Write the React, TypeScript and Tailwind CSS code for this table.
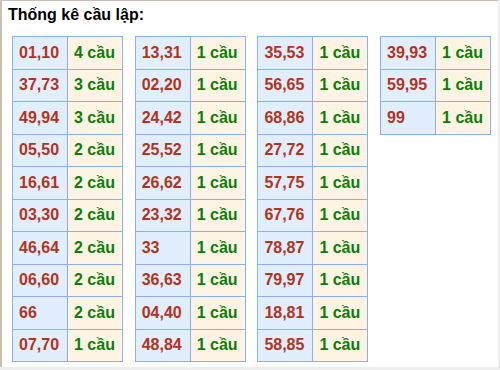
import React from "react";

const cols: [string, string][][] = [
  [
    ["01,10", "4 cầu"],
    ["37,73", "3 cầu"],
    ["49,94", "3 cầu"],
    ["05,50", "2 cầu"],
    ["16,61", "2 cầu"],
    ["03,30", "2 cầu"],
    ["46,64", "2 cầu"],
    ["06,60", "2 cầu"],
    ["66", "2 cầu"],
    ["07,70", "1 cầu"],
  ],
  [
    ["13,31", "1 cầu"],
    ["02,20", "1 cầu"],
    ["24,42", "1 cầu"],
    ["25,52", "1 cầu"],
    ["26,62", "1 cầu"],
    ["23,32", "1 cầu"],
    ["33", "1 cầu"],
    ["36,63", "1 cầu"],
    ["04,40", "1 cầu"],
    ["48,84", "1 cầu"],
  ],
  [
    ["35,53", "1 cầu"],
    ["56,65", "1 cầu"],
    ["68,86", "1 cầu"],
    ["27,72", "1 cầu"],
    ["57,75", "1 cầu"],
    ["67,76", "1 cầu"],
    ["78,87", "1 cầu"],
    ["79,97", "1 cầu"],
    ["18,81", "1 cầu"],
    ["58,85", "1 cầu"],
  ],
  [
    ["39,93", "1 cầu"],
    ["59,95", "1 cầu"],
    ["99", "1 cầu"],
  ],
];

export default function App() {
  return (
    <div className="w-[500px] h-[370px] bg-[#eeeeee] overflow-hidden">
      <div
        className="w-[498px] h-[367px] bg-white border-l-2 border-t border-[#c9c0b3]"
        style={{ fontFamily: '"Liberation Sans", Arial, sans-serif' }}
      >
        <div className="pl-[6px] pt-[5px] h-[35px] text-[16px] leading-[18px] font-bold text-black">
          Thống kê cầu lập:
        </div>
        <div className="flex items-start gap-[11.7px] pl-[10px]">
          {cols.map((rows, i) => (
            <table
              key={i}
              className="border-collapse w-[110px] text-[16px] font-bold table-fixed"
            >
              <tbody>
                {rows.map(([a, b], j) => (
                  <tr key={j} className="h-[32.5px]">
                    <td className="w-[55px] border border-[#8cb0f5] bg-[#e1eefe] text-[#b5331b] pl-[6px] leading-[18px]">
                      {a}
                    </td>
                    <td className="w-[55px] border border-[#8cb0f5] bg-[#fef4e3] text-[#0a7f0a] pl-[6px] leading-[18px]">
                      {b}
                    </td>
                  </tr>
                ))}
              </tbody>
            </table>
          ))}
        </div>
      </div>
    </div>
  );
}
